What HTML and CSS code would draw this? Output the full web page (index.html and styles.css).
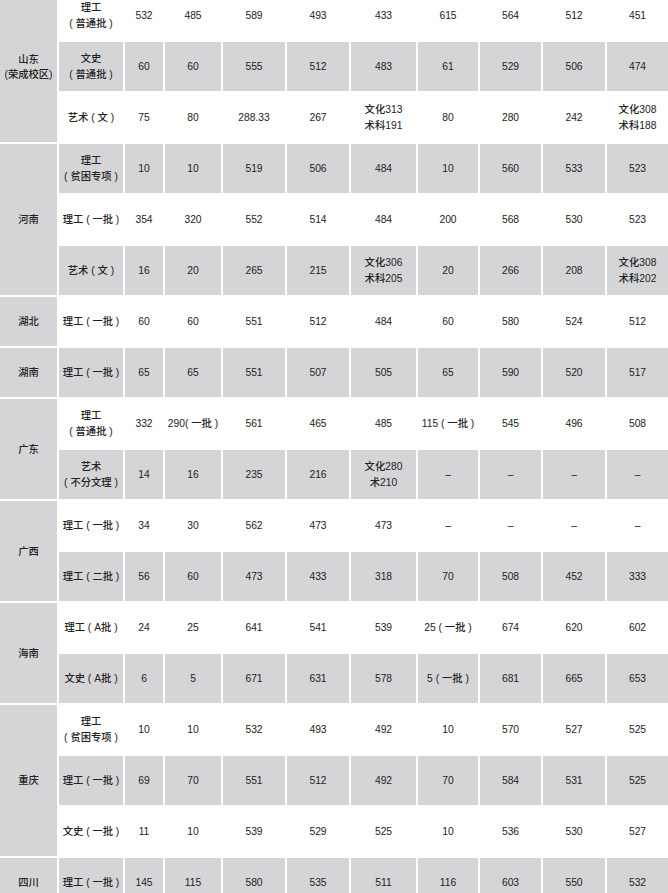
FILE: index.html
```html
<!DOCTYPE html>
<html lang="zh-CN">
<head>
<meta charset="utf-8">
<title>录取分数</title>
<link rel="stylesheet" href="styles.css">
</head>
<body>
<div class="sheet">
  <div class="c prov span3">山东<br>(荣成校区)</div>
  <div class="c">理工<br>( 普通批 )</div><div class="c">532</div><div class="c">485</div><div class="c">589</div><div class="c">493</div><div class="c">433</div><div class="c">615</div><div class="c">564</div><div class="c">512</div><div class="c">451</div>
  <div class="c g">文史<br>( 普通批 )</div><div class="c g">60</div><div class="c g">60</div><div class="c g">555</div><div class="c g">512</div><div class="c g">483</div><div class="c g">61</div><div class="c g">529</div><div class="c g">506</div><div class="c g">474</div>
  <div class="c">艺术 ( 文 )</div><div class="c">75</div><div class="c">80</div><div class="c">288.33</div><div class="c">267</div><div class="c">文化313<br>术科191</div><div class="c">80</div><div class="c">280</div><div class="c">242</div><div class="c">文化308<br>术科188</div>

  <div class="c prov span3">河南</div>
  <div class="c g">理工<br>( 贫困专项 )</div><div class="c g">10</div><div class="c g">10</div><div class="c g">519</div><div class="c g">506</div><div class="c g">484</div><div class="c g">10</div><div class="c g">560</div><div class="c g">533</div><div class="c g">523</div>
  <div class="c">理工 ( 一批 )</div><div class="c">354</div><div class="c">320</div><div class="c">552</div><div class="c">514</div><div class="c">484</div><div class="c">200</div><div class="c">568</div><div class="c">530</div><div class="c">523</div>
  <div class="c g">艺术 ( 文 )</div><div class="c g">16</div><div class="c g">20</div><div class="c g">265</div><div class="c g">215</div><div class="c g">文化306<br>术科205</div><div class="c g">20</div><div class="c g">266</div><div class="c g">208</div><div class="c g">文化308<br>术科202</div>

  <div class="c prov">湖北</div>
  <div class="c">理工 ( 一批 )</div><div class="c">60</div><div class="c">60</div><div class="c">551</div><div class="c">512</div><div class="c">484</div><div class="c">60</div><div class="c">580</div><div class="c">524</div><div class="c">512</div>

  <div class="c prov">湖南</div>
  <div class="c g">理工 ( 一批 )</div><div class="c g">65</div><div class="c g">65</div><div class="c g">551</div><div class="c g">507</div><div class="c g">505</div><div class="c g">65</div><div class="c g">590</div><div class="c g">520</div><div class="c g">517</div>

  <div class="c prov span2">广东</div>
  <div class="c">理工<br>( 普通批 )</div><div class="c">332</div><div class="c">290( 一批 )</div><div class="c">561</div><div class="c">465</div><div class="c">485</div><div class="c">115 ( 一批 )</div><div class="c">545</div><div class="c">496</div><div class="c">508</div>
  <div class="c g">艺术<br>( 不分文理 )</div><div class="c g">14</div><div class="c g">16</div><div class="c g">235</div><div class="c g">216</div><div class="c g">文化280<br>术210</div><div class="c g">–</div><div class="c g">–</div><div class="c g">–</div><div class="c g">–</div>

  <div class="c prov span2">广西</div>
  <div class="c">理工 ( 一批 )</div><div class="c">34</div><div class="c">30</div><div class="c">562</div><div class="c">473</div><div class="c">473</div><div class="c">–</div><div class="c">–</div><div class="c">–</div><div class="c">–</div>
  <div class="c g">理工 ( 二批 )</div><div class="c g">56</div><div class="c g">60</div><div class="c g">473</div><div class="c g">433</div><div class="c g">318</div><div class="c g">70</div><div class="c g">508</div><div class="c g">452</div><div class="c g">333</div>

  <div class="c prov span2">海南</div>
  <div class="c">理工 ( A批 )</div><div class="c">24</div><div class="c">25</div><div class="c">641</div><div class="c">541</div><div class="c">539</div><div class="c">25 ( 一批 )</div><div class="c">674</div><div class="c">620</div><div class="c">602</div>
  <div class="c g">文史 ( A批 )</div><div class="c g">6</div><div class="c g">5</div><div class="c g">671</div><div class="c g">631</div><div class="c g">578</div><div class="c g">5 ( 一批 )</div><div class="c g">681</div><div class="c g">665</div><div class="c g">653</div>

  <div class="c prov span3">重庆</div>
  <div class="c">理工<br>( 贫困专项 )</div><div class="c">10</div><div class="c">10</div><div class="c">532</div><div class="c">493</div><div class="c">492</div><div class="c">10</div><div class="c">570</div><div class="c">527</div><div class="c">525</div>
  <div class="c g">理工 ( 一批 )</div><div class="c g">69</div><div class="c g">70</div><div class="c g">551</div><div class="c g">512</div><div class="c g">492</div><div class="c g">70</div><div class="c g">584</div><div class="c g">531</div><div class="c g">525</div>
  <div class="c">文史 ( 一批 )</div><div class="c">11</div><div class="c">10</div><div class="c">539</div><div class="c">529</div><div class="c">525</div><div class="c">10</div><div class="c">536</div><div class="c">530</div><div class="c">527</div>

  <div class="c prov">四川</div>
  <div class="c g">理工 ( 一批 )</div><div class="c g">145</div><div class="c g">115</div><div class="c g">580</div><div class="c g">535</div><div class="c g">511</div><div class="c g">116</div><div class="c g">603</div><div class="c g">550</div><div class="c g">532</div>
</div>
</body>
</html>
```

FILE: styles.css
```css
html, body {
  margin: 0;
  padding: 0;
  background: #ffffff;
}

body {
  width: 668px;
  height: 893px;
  overflow: hidden;
  font-family: "Liberation Sans", "Noto Sans CJK SC", sans-serif;
  font-size: 10.3px;
  font-weight: 500;
  color: #222222;
}

.sheet {
  display: grid;
  grid-template-columns: 57px 64px 38px 56px 62px 62px 65px 60px 61px 62px 61px;
  grid-auto-rows: 49px;
  gap: 2px;
  margin-top: -9px;
}

.c {
  display: flex;
  align-items: center;
  justify-content: center;
  text-align: center;
  line-height: 16px;
  white-space: nowrap;
}

.g {
  background: #d5d5d7;
}

.prov {
  background: #d5d5d7;
  line-height: 15px;
}

.span2 { grid-row: span 2; }
.span3 { grid-row: span 3; }
```
